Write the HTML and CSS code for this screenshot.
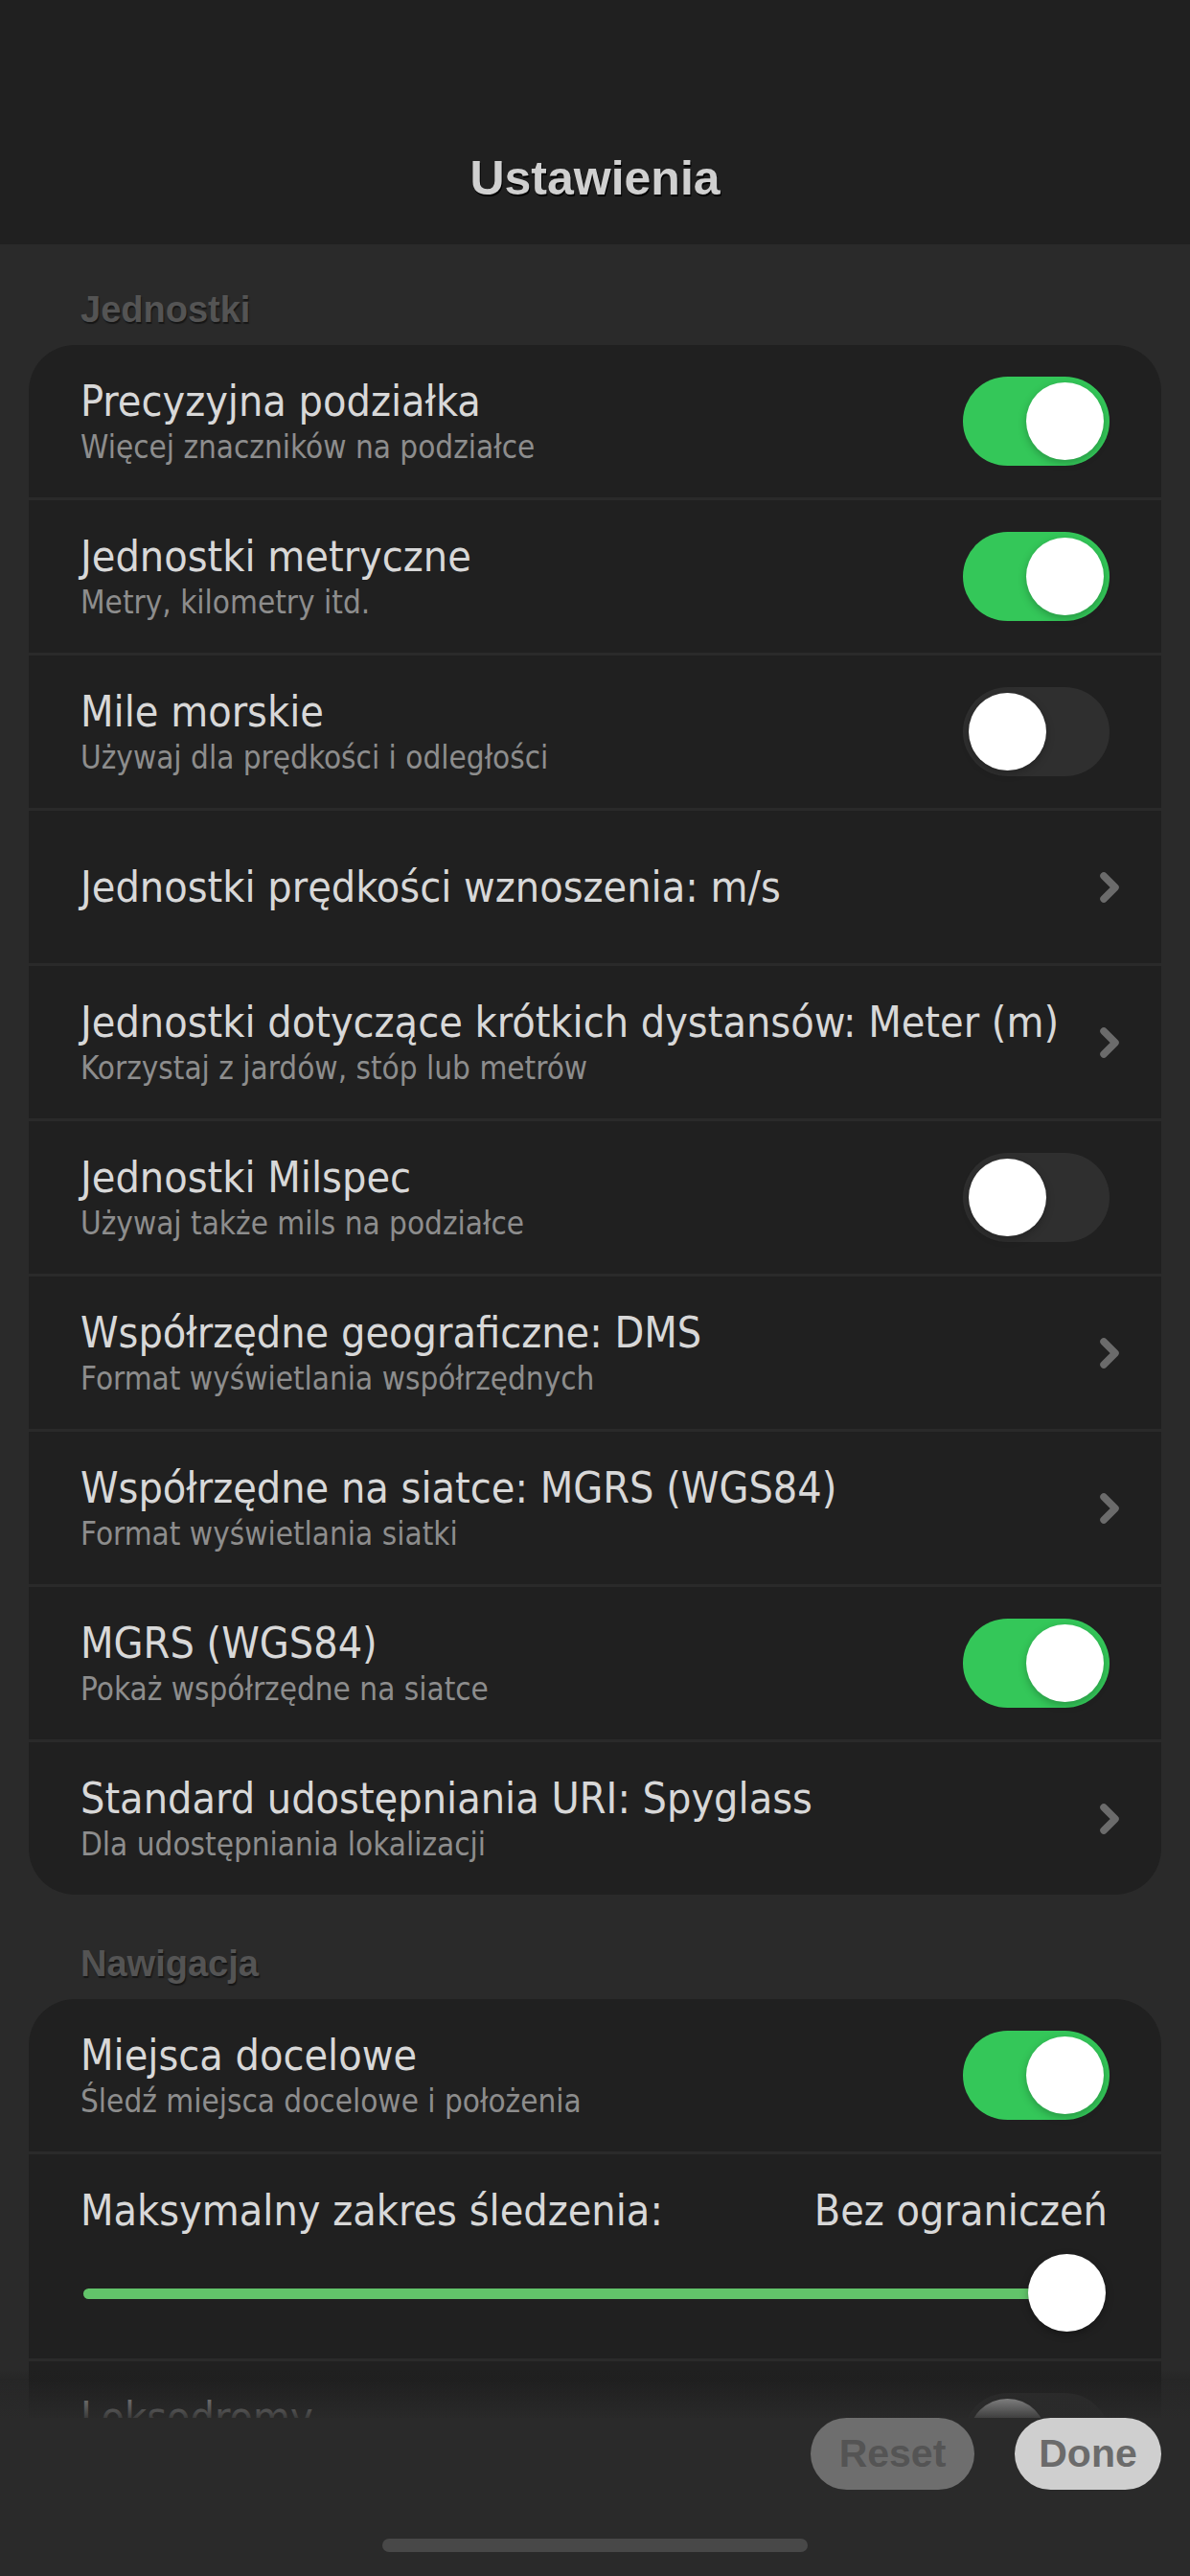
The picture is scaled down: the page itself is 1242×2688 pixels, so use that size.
FILE: index.html
```html
<!DOCTYPE html>
<html lang="pl">
<head>
<meta charset="utf-8">
<title>Ustawienia</title>
<link rel="stylesheet" href="styles.css">
</head>
<body>
<div class="screen">
  <header class="topbar">
    <h1 class="title">Ustawienia</h1>
  </header>
  <main class="content">
    <h2 class="section-title first">Jednostki</h2>
    <div class="card">
      <div class="row">
        <div class="text"><div class="label">Precyzyjna podziałka</div><div class="sub">Więcej znaczników na podziałce</div></div>
        <div class="toggle on"><span class="knob"></span></div>
      </div>
      <div class="row">
        <div class="text"><div class="label">Jednostki metryczne</div><div class="sub">Metry, kilometry itd.</div></div>
        <div class="toggle on"><span class="knob"></span></div>
      </div>
      <div class="row">
        <div class="text"><div class="label">Mile morskie</div><div class="sub">Używaj dla prędkości i odległości</div></div>
        <div class="toggle"><span class="knob"></span></div>
      </div>
      <div class="row link">
        <div class="text"><div class="label">Jednostki prędkości wznoszenia: m/s</div></div>
        <svg class="chev" viewBox="0 0 22 34" width="22" height="34"><polyline points="5,5 17,17 5,29" /></svg>
      </div>
      <div class="row link">
        <div class="text"><div class="label">Jednostki dotyczące krótkich dystansów: Meter (m)</div><div class="sub">Korzystaj z jardów, stóp lub metrów</div></div>
        <svg class="chev" viewBox="0 0 22 34" width="22" height="34"><polyline points="5,5 17,17 5,29" /></svg>
      </div>
      <div class="row">
        <div class="text"><div class="label">Jednostki Milspec</div><div class="sub">Używaj także mils na podziałce</div></div>
        <div class="toggle"><span class="knob"></span></div>
      </div>
      <div class="row link">
        <div class="text"><div class="label">Współrzędne geograficzne: DMS</div><div class="sub">Format wyświetlania współrzędnych</div></div>
        <svg class="chev" viewBox="0 0 22 34" width="22" height="34"><polyline points="5,5 17,17 5,29" /></svg>
      </div>
      <div class="row link">
        <div class="text"><div class="label">Współrzędne na siatce: MGRS (WGS84)</div><div class="sub">Format wyświetlania siatki</div></div>
        <svg class="chev" viewBox="0 0 22 34" width="22" height="34"><polyline points="5,5 17,17 5,29" /></svg>
      </div>
      <div class="row">
        <div class="text"><div class="label">MGRS (WGS84)</div><div class="sub">Pokaż współrzędne na siatce</div></div>
        <div class="toggle on"><span class="knob"></span></div>
      </div>
      <div class="row link">
        <div class="text"><div class="label">Standard udostępniania URI: Spyglass</div><div class="sub">Dla udostępniania lokalizacji</div></div>
        <svg class="chev" viewBox="0 0 22 34" width="22" height="34"><polyline points="5,5 17,17 5,29" /></svg>
      </div>
    </div>

    <h2 class="section-title second">Nawigacja</h2>
    <div class="card">
      <div class="row">
        <div class="text"><div class="label">Miejsca docelowe</div><div class="sub">Śledź miejsca docelowe i położenia</div></div>
        <div class="toggle on"><span class="knob"></span></div>
      </div>
      <div class="slider-row">
        <div class="slider-head"><span class="label">Maksymalny zakres śledzenia:</span><span class="label">Bez ograniczeń</span></div>
        <div class="slider">
          <div class="track"></div>
          <span class="slider-knob"></span>
        </div>
      </div>
      <div class="row row-top">
        <div class="text"><div class="label">Loksodromy</div></div>
        <div class="toggle"><span class="knob"></span></div>
      </div>
    </div>
  </main>

  <div class="fade"></div>
  <footer class="bottombar">
    <div class="actions">
      <button class="btn reset">Reset</button>
      <button class="btn done">Done</button>
    </div>
    <div class="home-indicator"></div>
  </footer>
</div>
</body>
</html>
```

FILE: styles.css
```css
html, body {
  margin: 0;
  padding: 0;
  background: #2a2a2a;
}

.screen {
  position: relative;
  width: 1242px;
  height: 2688px;
  overflow: hidden;
  background: #2a2a2a;
}

.topbar {
  height: 255px;
  box-sizing: border-box;
  padding-top: 156px;
  background: #202020;
}

.title {
  margin: 0;
  text-align: center;
  font-family: "Liberation Sans", Arial, sans-serif;
  font-weight: bold;
  font-size: 50px;
  line-height: 60px;
  color: #d0d0d0;
  text-shadow: 1px 2px 0 #000;
}

.content {
  padding: 0 30px;
}

.section-title {
  margin: 0 0 15px 0;
  padding-left: 54px;
  font-family: "Liberation Sans", Arial, sans-serif;
  font-weight: bold;
  font-size: 38px;
  line-height: 44px;
  color: #545454;
  text-shadow: 1px 2px 1px #161616;
}

.section-title.first { padding-top: 46px; }
.section-title.second { padding-top: 50px; }

.card {
  display: flex;
  flex-direction: column;
  gap: 3px;
  border-radius: 48px;
  overflow: hidden;
}

.row {
  height: 159px;
  box-sizing: border-box;
  padding: 0 54px;
  display: flex;
  align-items: center;
  justify-content: space-between;
  background: #202020;
}

.row.link {
  padding-right: 43px;
}

.row.row-top {
  align-items: flex-start;
  padding-top: 33px;
}

.text {
  display: flex;
  flex-direction: column;
  min-width: 0;
}

.label {
  font-family: "DejaVu Sans Condensed", "DejaVu Sans", sans-serif;
  font-stretch: condensed;
  font-size: 44.5px;
  line-height: 52px;
  color: #d8d8d8;
  white-space: nowrap;
}

.sub {
  margin-top: 3px;
  font-family: "DejaVu Sans Condensed", "DejaVu Sans", sans-serif;
  font-stretch: condensed;
  font-size: 33px;
  line-height: 38px;
  color: #8d8d8d;
  white-space: nowrap;
}

.toggle {
  flex: none;
  width: 153px;
  height: 93px;
  box-sizing: border-box;
  padding: 6px;
  border-radius: 47px;
  background: #2f2f2f;
  display: flex;
  justify-content: flex-start;
}

.toggle.on {
  background: #34c759;
  justify-content: flex-end;
}

.knob {
  width: 81px;
  height: 81px;
  border-radius: 50%;
  background: #ffffff;
  box-shadow: 0 3px 8px rgba(0, 0, 0, 0.25);
}

.chev {
  flex: none;
  fill: none;
  stroke: #6b6b6b;
  stroke-width: 7.5;
  stroke-linecap: round;
  stroke-linejoin: round;
}

.slider-row {
  height: 213px;
  box-sizing: border-box;
  padding: 33px 56px 0 54px;
  background: #202020;
}

.slider-head {
  display: flex;
  justify-content: space-between;
}

.slider {
  position: relative;
  margin-top: 19px;
  margin-left: 3px;
  margin-right: 2px;
  height: 82px;
  display: flex;
  align-items: center;
}

.track {
  flex: 1;
  height: 11px;
  margin-right: 40px;
  border-radius: 6px;
  background: #62c46a;
}

.slider-knob {
  position: absolute;
  right: 0;
  top: 0;
  width: 81px;
  height: 81px;
  border-radius: 50%;
  background: #ffffff;
  box-shadow: 0 3px 8px rgba(0, 0, 0, 0.3);
}

.fade {
  position: absolute;
  left: 0;
  right: 0;
  top: 2473px;
  height: 50px;
  background: linear-gradient(to bottom, rgba(42, 42, 42, 0) 0%, rgba(30, 30, 30, 0.3) 20%, rgba(42, 42, 42, 0.9) 100%);
}

.bottombar {
  position: absolute;
  left: 0;
  right: 0;
  bottom: 0;
  height: 165px;
  background: #2a2a2a;
  display: flex;
  flex-direction: column;
  align-items: center;
}

.actions {
  align-self: stretch;
  display: flex;
  justify-content: flex-end;
  gap: 42px;
  padding-right: 30px;
}

.btn {
  height: 75px;
  border: none;
  border-radius: 38px;
  padding: 0;
  font-family: "Liberation Sans", Arial, sans-serif;
  font-weight: bold;
  font-size: 41px;
  line-height: 75px;
  text-align: center;
}

.btn.reset {
  width: 171px;
  background: #6e6e6e;
  color: #545454;
}

.btn.done {
  width: 153px;
  background: #cfcfcf;
  color: #6b6b6b;
}

.home-indicator {
  margin-top: 51px;
  width: 444px;
  height: 14px;
  border-radius: 7px;
  background: #484848;
}
```
